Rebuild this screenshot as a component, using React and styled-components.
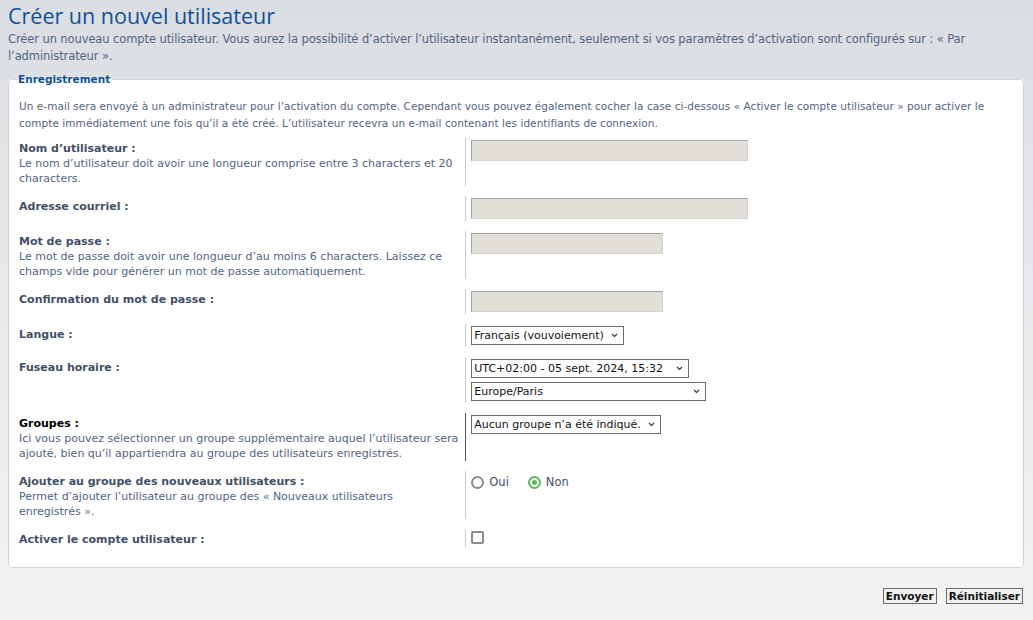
import React from "react";
import styled, { createGlobalStyle } from "styled-components";

const GlobalStyle = createGlobalStyle`
  html, body {
    margin: 0;
    padding: 0;
  }
  body {
    min-height: 100vh;
    background: linear-gradient(to bottom, #dadde2 0%, #e9eaec 55%, #f3f3f3 100%);
    font-family: "DejaVu Sans", Verdana, sans-serif;
    font-size: 11px;
    color: #536482;
  }
`;

const Page = styled.div`
  padding: 3px 9px 0 8px;
`;

const Title = styled.h1`
  margin: 0;
  font-family: "Open Sans", "DejaVu Sans", sans-serif;
  font-weight: 400;
  font-size: 21.5px;
  line-height: 26px;
  color: #115098;
`;

const Intro = styled.p`
  margin: 2px 0 0;
  font-size: 11.5px;
  letter-spacing: -0.1px;
  line-height: 17px;
  color: #536482;
`;

const Panel = styled.fieldset`
  margin: 8px 0 0;
  padding: 6px 10px 10px 10px;
  background: #fff;
  border: 1px solid #d2d4d8;
  border-radius: 4px;
  min-width: 0;
`;

const Legend = styled.legend`
  padding: 0 2px 0 0;
  margin-left: -1px;
  font-weight: bold;
  font-size: 10.5px;
  color: #115098;
`;

const Explain = styled.p`
  margin: 7px 0 6px;
  line-height: 17px;
  font-size: 10.5px;
  letter-spacing: 0.05px;
  color: #536482;
`;

const Row = styled.div`
  display: flex;
  margin-bottom: 10px;
`;

const Term = styled.div`
  width: 45%;
  flex: none;
  box-sizing: border-box;
  padding-top: 4px;
  border-right: 1px solid ${(p) => (p.$active ? "#555" : "#ccc")};
`;

const Label = styled.label`
  display: block;
  font-weight: bold;
  line-height: 14px;
  color: ${(p) => (p.$active ? "#000" : "#425067")};
`;

const Desc = styled.span`
  display: block;
  line-height: 15px;
  color: #536482;
`;

const Field = styled.div`
  padding: 2px 0 2px 5px;
  display: flex;
  flex-direction: column;
  gap: 4px;
  align-items: flex-start;
`;

const TextInput = styled.input`
  box-sizing: border-box;
  width: ${(p) => p.$w}px;
  height: 21px;
  margin: 0;
  background: #e1dfd8;
  border: 1px solid #d4d2cb;
  border-top-color: #a6a6a6;
  border-left-color: #a6a6a6;
  border-radius: 0;
  outline: none;
`;

const SelectWrap = styled.div`
  position: relative;
  width: ${(p) => p.$w}px;
`;

const Select = styled.select`
  appearance: none;
  box-sizing: border-box;
  width: 100%;
  height: 19px;
  margin: 0;
  padding: 0 16px 0 2px;
  background: #fff;
  border: 1px solid #6b6b6b;
  border-radius: 0;
  font-family: "DejaVu Sans", Verdana, sans-serif;
  font-size: 11px;
  color: #111;
  outline: none;
`;

const Chevron = styled.svg`
  position: absolute;
  right: 6px;
  top: 7px;
  width: 7px;
  height: 5px;
  pointer-events: none;
`;

const Choices = styled.div`
  display: flex;
  gap: 19px;
  padding-top: 2px;
`;

const Choice = styled.label`
  display: flex;
  align-items: center;
  gap: 5px;
  font-size: 11.5px;
  color: #425067;
`;

const Radio = styled.span`
  box-sizing: border-box;
  width: 13px;
  height: 13px;
  border-radius: 50%;
  border: 2px solid ${(p) => (p.$on ? "#5cb85c" : "#8a8a94")};
  display: flex;
  align-items: center;
  justify-content: center;
  &::after {
    content: "";
    display: ${(p) => (p.$on ? "block" : "none")};
    width: 5px;
    height: 5px;
    border-radius: 50%;
    background: #5cb85c;
  }
`;

const Checkbox = styled.span`
  display: block;
  box-sizing: border-box;
  width: 13px;
  height: 13px;
  border: 2px solid #8a8a94;
  border-radius: 2px;
`;

const Actions = styled.div`
  display: flex;
  justify-content: flex-end;
  gap: 9px;
  margin-top: 20px;
  padding-right: 1px;
`;

const Button = styled.button`
  height: 16px;
  padding: 0 2px;
  background: #f0f0f0;
  border: 1px solid #6a6a6a;
  border-radius: 0;
  font-family: "DejaVu Sans", Verdana, sans-serif;
  font-weight: bold;
  font-size: 10.5px;
  color: #111;
  line-height: 12px;
`;

const introText =
  "Créer un nouveau compte utilisateur. Vous aurez la possibilité d’activer l’utilisateur instantanément, seulement si vos paramètres d’activation sont configurés sur : «\u00a0Par l’administrateur\u00a0».";

const explainText =
  "Un e-mail sera envoyé à un administrateur pour l’activation du compte. Cependant vous pouvez également cocher la case ci-dessous «\u00a0Activer le compte utilisateur\u00a0» pour activer le compte immédiatement une fois qu’il a été créé. L’utilisateur recevra un e-mail contenant les identifiants de connexion.";

const newGroupText =
  "Permet d’ajouter l’utilisateur au groupe des «\u00a0Nouveaux utilisateurs enregistrés\u00a0».";

function Dropdown({ w, value }) {
  return (
    <SelectWrap $w={w}>
      <Select defaultValue={value}>
        <option>{value}</option>
      </Select>
      <Chevron viewBox="0 0 7 5">
        <path d="M1 1l2.5 2.5L6 1" fill="none" stroke="#333" strokeWidth="1.1" />
      </Chevron>
    </SelectWrap>
  );
}

export default function App() {
  return (
    <Page>
      <GlobalStyle />
      <Title>Créer un nouvel utilisateur</Title>
      <Intro>{introText}</Intro>
      <Panel>
        <Legend>Enregistrement</Legend>
        <Explain>{explainText}</Explain>

        <Row>
          <Term>
            <Label>Nom d’utilisateur :</Label>
            <Desc>Le nom d’utilisateur doit avoir une longueur comprise entre 3 characters et 20 characters.</Desc>
          </Term>
          <Field>
            <TextInput $w={277} />
          </Field>
        </Row>

        <Row>
          <Term>
            <Label>Adresse courriel :</Label>
          </Term>
          <Field>
            <TextInput $w={277} />
          </Field>
        </Row>

        <Row>
          <Term>
            <Label>Mot de passe :</Label>
            <Desc>Le mot de passe doit avoir une longueur d’au moins 6 characters. Laissez ce champs vide pour générer un mot de passe automatiquement.</Desc>
          </Term>
          <Field>
            <TextInput $w={192} type="password" />
          </Field>
        </Row>

        <Row>
          <Term>
            <Label>Confirmation du mot de passe :</Label>
          </Term>
          <Field>
            <TextInput $w={192} type="password" />
          </Field>
        </Row>

        <Row>
          <Term>
            <Label>Langue :</Label>
          </Term>
          <Field>
            <Dropdown w={153} value="Français (vouvoiement)" />
          </Field>
        </Row>

        <Row>
          <Term>
            <Label>Fuseau horaire :</Label>
          </Term>
          <Field>
            <Dropdown w={218} value="UTC+02:00 - 05 sept. 2024, 15:32" />
            <Dropdown w={235} value="Europe/Paris" />
          </Field>
        </Row>

        <Row>
          <Term $active>
            <Label $active>Groupes :</Label>
            <Desc>Ici vous pouvez sélectionner un groupe supplémentaire auquel l’utilisateur sera ajouté, bien qu’il appartiendra au groupe des utilisateurs enregistrés.</Desc>
          </Term>
          <Field>
            <Dropdown w={190} value="Aucun groupe n’a été indiqué." />
          </Field>
        </Row>

        <Row>
          <Term>
            <Label>Ajouter au groupe des nouveaux utilisateurs :</Label>
            <Desc>{newGroupText}</Desc>
          </Term>
          <Field>
            <Choices>
              <Choice><Radio />Oui</Choice>
              <Choice><Radio $on />Non</Choice>
            </Choices>
          </Field>
        </Row>

        <Row>
          <Term>
            <Label>Activer le compte utilisateur :</Label>
          </Term>
          <Field>
            <Checkbox />
          </Field>
        </Row>
      </Panel>
      <Actions>
        <Button>Envoyer</Button>
        <Button>Réinitialiser</Button>
      </Actions>
    </Page>
  );
}
